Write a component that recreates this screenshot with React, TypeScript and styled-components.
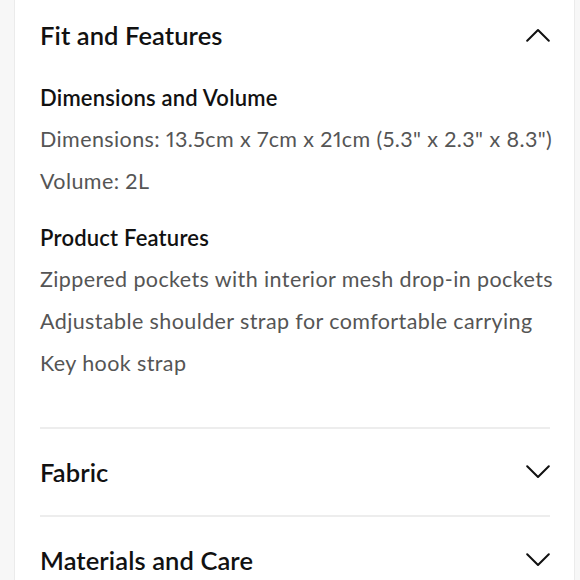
import React from "react";
import styled, { createGlobalStyle } from "styled-components";

const Global = createGlobalStyle`
  html, body { margin: 0; padding: 0; background: #f7f7f7; }
  body { font-family: Lato, "Open Sans", sans-serif; -webkit-font-smoothing: antialiased; }
`;

const Page = styled.div`
  width: 580px;
  height: 580px;
  overflow: hidden;
  background: #f7f7f7;
  display: flex;
`;

const Panel = styled.div`
  margin-left: 14px;
  width: 561px;
  box-sizing: border-box;
  background: #fff;
  border-left: 1px solid #ebebeb;
  border-right: 1px solid #ebebeb;
  padding: 0 24px 0 25px;
  display: flex;
  flex-direction: column;
`;

const Section = styled.section<{ $divider?: boolean }>`
  border-top: ${(p) => (p.$divider ? "2px solid #ededed" : "none")};
`;

const Header = styled.div<{ $h: number }>`
  height: ${(p) => p.$h}px;
  display: flex;
  align-items: center;
  justify-content: space-between;
`;

const Title = styled.h2`
  margin: 0;
  font-size: 25.5px;
  font-weight: 600;
  color: #111;
  letter-spacing: 0.1px;
`;

const Body = styled.div`
  padding-top: 14px;
  padding-bottom: 21px;
`;

const Group = styled.div`
  margin-bottom: 22px;
`;

const SubTitle = styled.h3`
  margin: 0 0 6px;
  font-size: 22px;
  font-weight: 600;
  letter-spacing: 0.2px;
  color: #111;
  line-height: 28px;
`;

const Item = styled.p`
  margin: 0;
  font-size: 21.5px;
  letter-spacing: 0.4px;
  line-height: 42px;
  color: #555;
  white-space: nowrap;
  font-variant-numeric: proportional-nums;
`;

const Chevron = ({ up }: { up?: boolean }) => (
  <svg width="24" height="14" viewBox="0 0 24 14" fill="none">
    <path
      d={up ? "M1.2 12.8 L12 2 L22.8 12.8" : "M1.2 1.2 L12 12 L22.8 1.2"}
      stroke="#111"
      strokeWidth="2"
      strokeLinecap="round"
      strokeLinejoin="round"
    />
  </svg>
);

export default function App() {
  return (
    <>
      <Global />
      <Page>
        <Panel>
          <Section>
            <Header $h={70}>
              <Title>Fit and Features</Title>
              <Chevron up />
            </Header>
            <Body>
              <Group>
                <SubTitle>Dimensions and Volume</SubTitle>
                <Item>Dimensions: 13.5cm x 7cm x 21cm (5.3" x 2.3" x 8.3")</Item>
                <Item>Volume: 2L</Item>
              </Group>
              <Group>
                <SubTitle>Product Features</SubTitle>
                <Item>Zippered pockets with interior mesh drop-in pockets</Item>
                <Item>Adjustable shoulder strap for comfortable carrying</Item>
                <Item>Key hook strap</Item>
              </Group>
            </Body>
          </Section>
          <Section $divider>
            <Header $h={86}>
              <Title>Fabric</Title>
              <Chevron />
            </Header>
          </Section>
          <Section $divider>
            <Header $h={86}>
              <Title>Materials and Care</Title>
              <Chevron />
            </Header>
          </Section>
        </Panel>
      </Page>
    </>
  );
}
